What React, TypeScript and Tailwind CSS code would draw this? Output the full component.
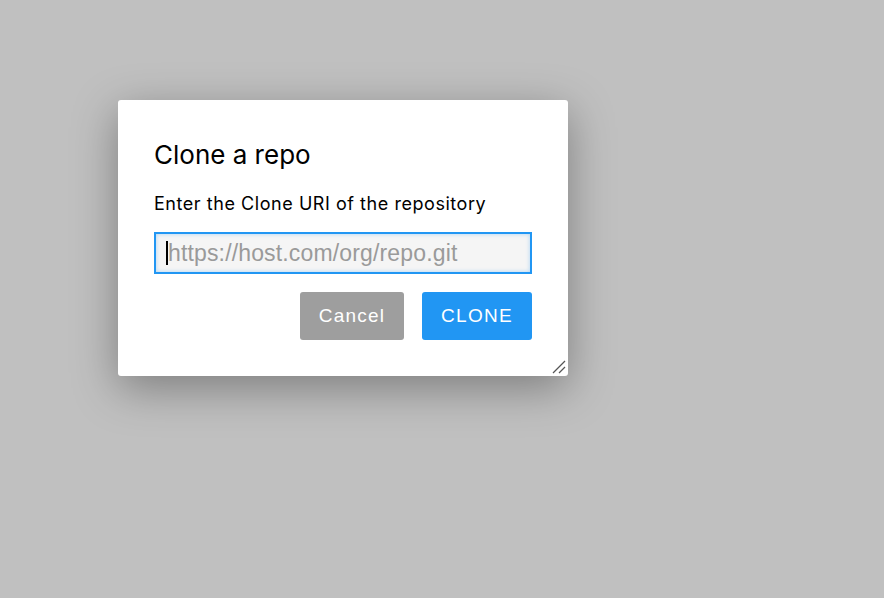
export default function App() {
  return (
    <div className="w-[884px] h-[598px] bg-[#c0c0c0] pt-[100px] pl-[118px] font-['Inter',sans-serif]">
      <div className="relative w-[450px] h-[276px] bg-white rounded-[3px] shadow-[0_12px_45px_rgba(0,0,0,0.35)] px-[36px] pt-[38px]">
        <h2 className="text-[26px] leading-[34px] text-black">Clone a repo</h2>
        <p className="mt-[20px] text-[18px] leading-[24px] tracking-[0.55px] text-black">Enter the Clone URI of the repository</p>
        <div className="mt-[16px] h-[42px] border-2 border-[#2196f3] bg-[#f5f5f5] shadow-[inset_0_0_4px_rgba(33,150,243,0.35)] flex items-center pl-[10px]">
          <div className="w-[2px] h-[24px] bg-black" />
          <input
            className="flex-1 bg-transparent outline-none text-[23px] tracking-[0.15px] text-black placeholder:text-[#9a9a9a] font-['Liberation_Sans',sans-serif]"
            placeholder="https://host.com/org/repo.git"
          />
        </div>
        <div className="mt-[18px] flex justify-end gap-[18px]">
          <button className="w-[104px] h-[48px] rounded-[3px] bg-[#9e9e9e] text-white text-[19px] tracking-[1.2px] font-['Liberation_Sans',sans-serif]">Cancel</button>
          <button className="w-[110px] h-[48px] rounded-[3px] bg-[#2196f3] text-white text-[19px] tracking-[1.3px] font-['Liberation_Sans',sans-serif]">CLONE</button>
        </div>
        <svg className="absolute right-[2px] bottom-[2px]" width="14" height="14" viewBox="0 0 14 14">
          <line x1="1" y1="13" x2="13" y2="1" stroke="#555" strokeWidth="1.3" />
          <line x1="7" y1="13" x2="13" y2="7" stroke="#555" strokeWidth="1.3" />
        </svg>
      </div>
    </div>
  );
}
